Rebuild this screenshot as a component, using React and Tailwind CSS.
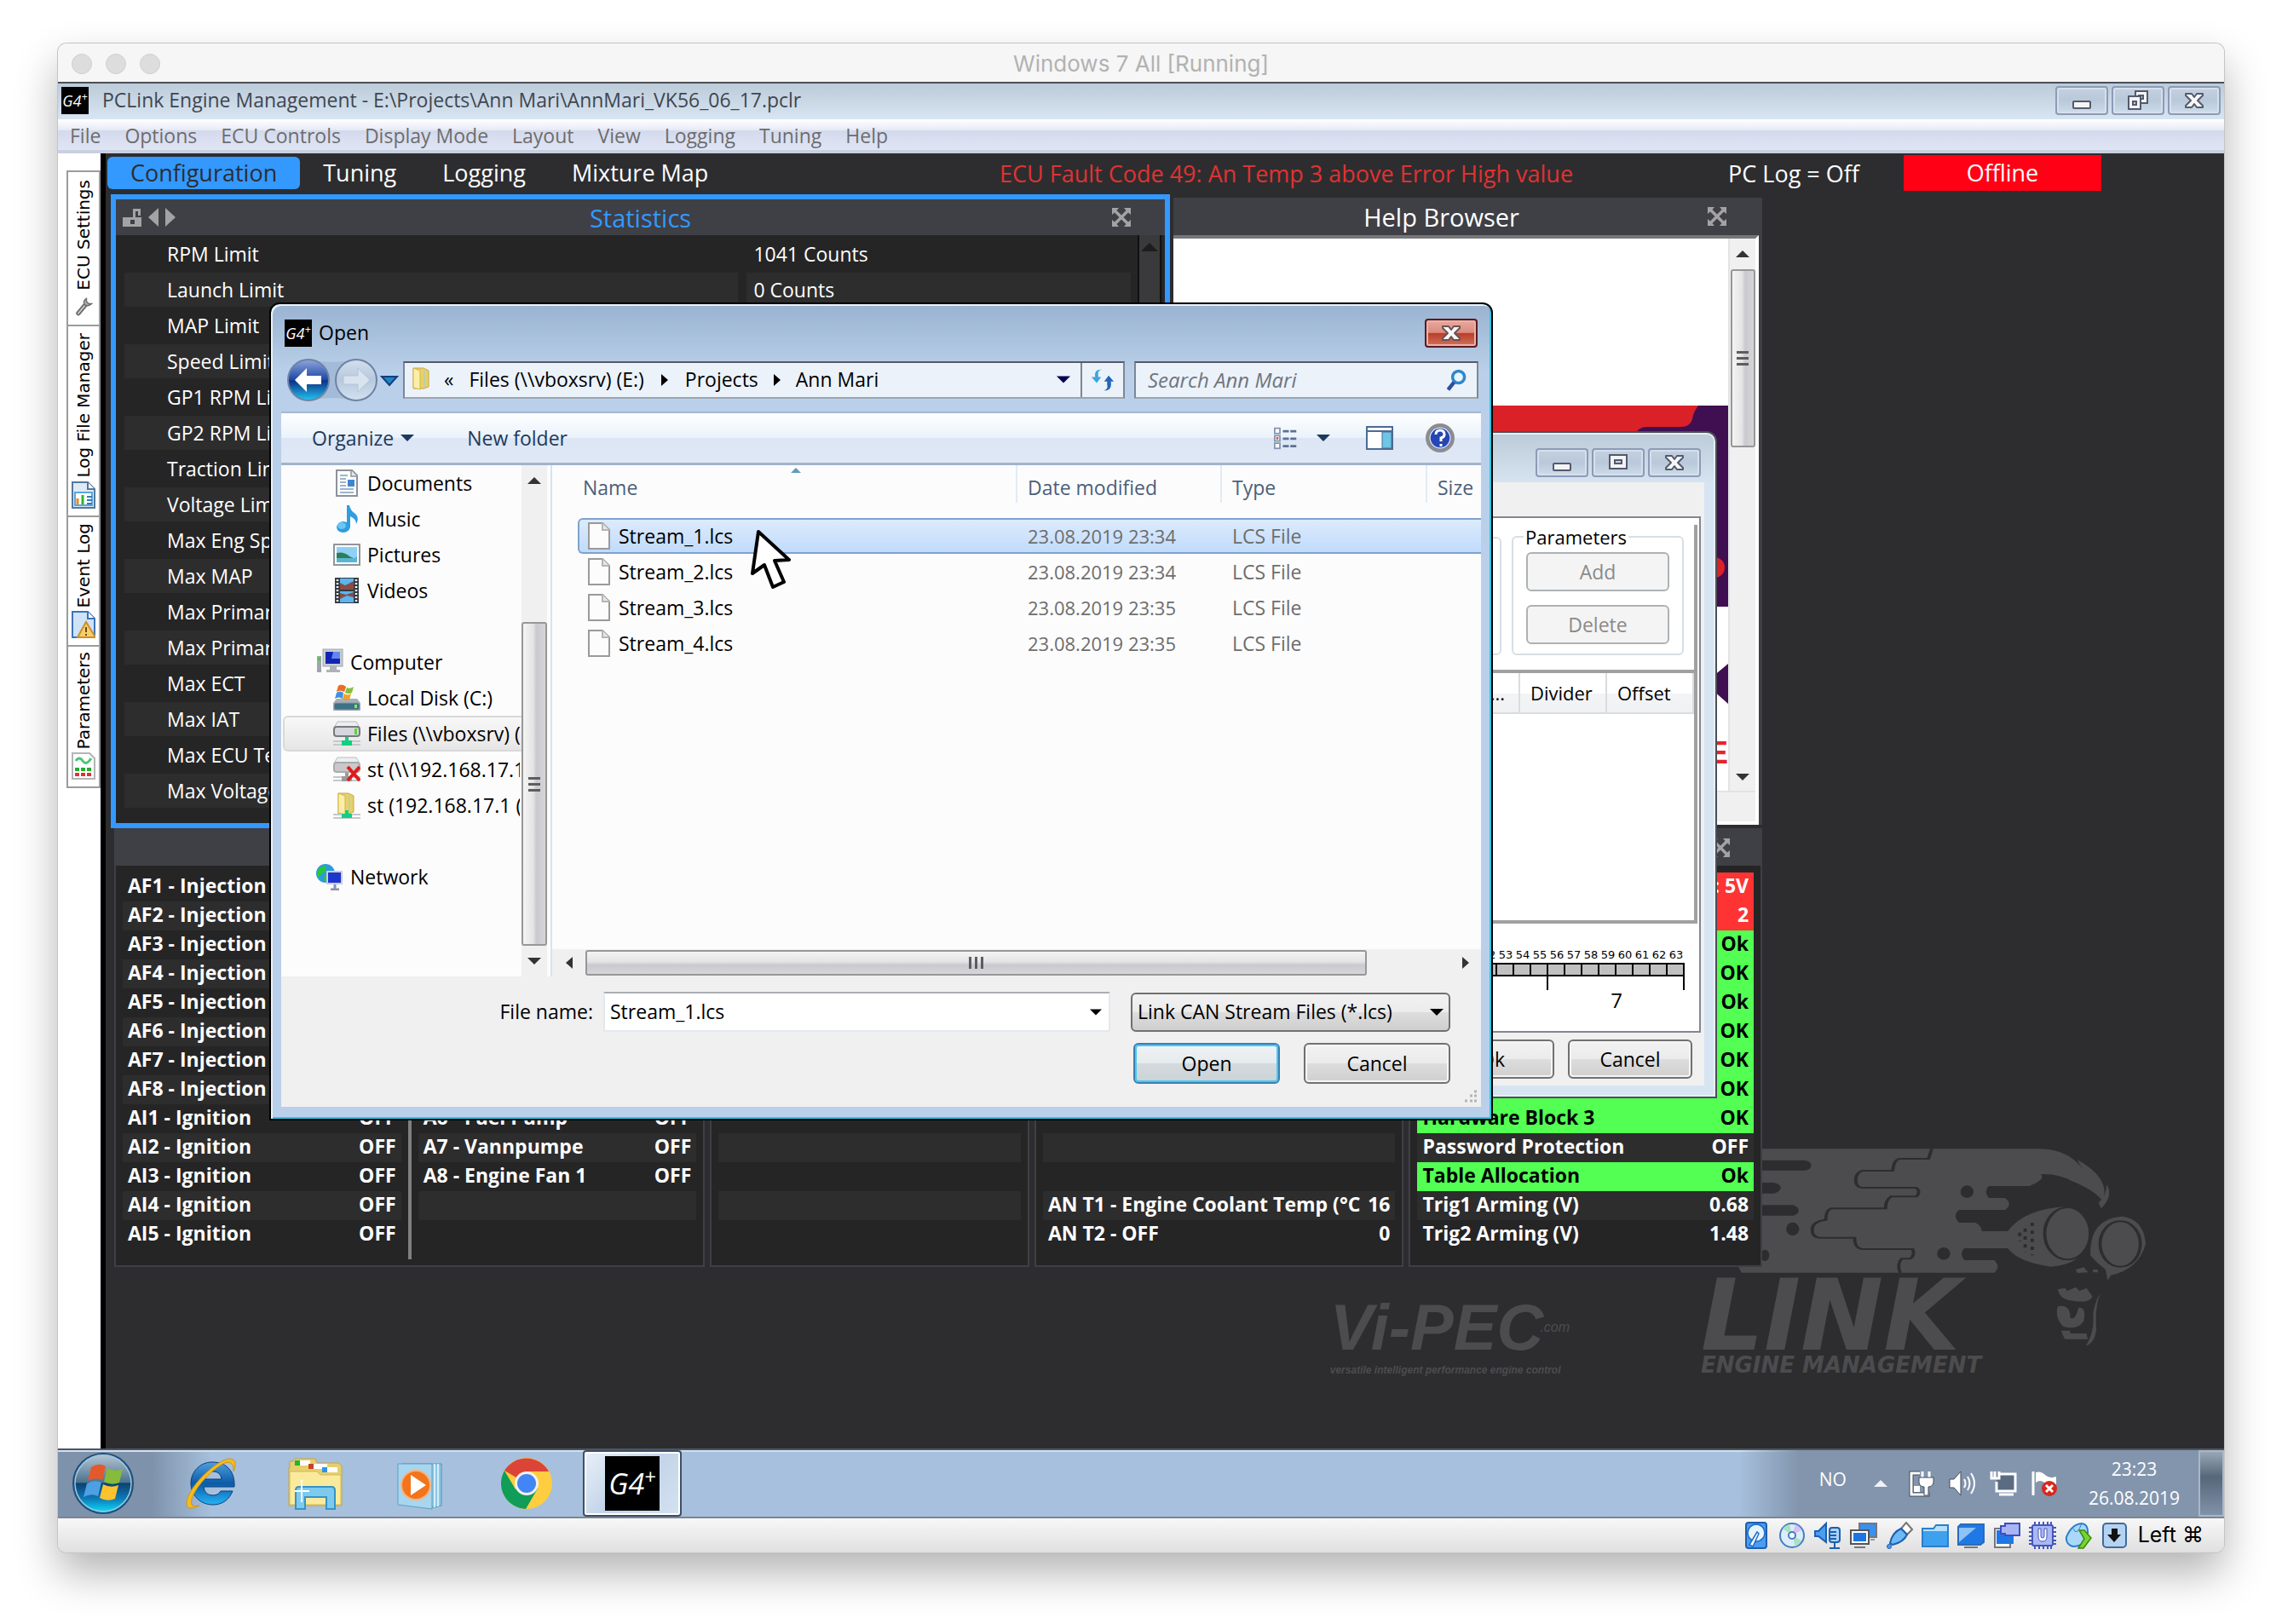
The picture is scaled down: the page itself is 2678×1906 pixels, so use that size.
import { useState } from 'react';
import clsx from 'clsx';

const UI_FONT = "font-['Open_Sans','Noto_Sans',sans-serif]";

const MENU = ['File', 'Options', 'ECU Controls', 'Display Mode', 'Layout', 'View', 'Logging', 'Tuning', 'Help'];
const PAGES = ['Configuration', 'Tuning', 'Logging', 'Mixture Map'];

const STATISTICS = [
  ['RPM Limit', '1041 Counts'],
  ['Launch Limit', '0 Counts'],
  ['MAP Limit', ''],
  ['Speed Limit', ''],
  ['GP1 RPM Limit', ''],
  ['GP2 RPM Limit', ''],
  ['Traction Limit', ''],
  ['Voltage Limit', ''],
  ['Max Eng Speed', ''],
  ['Max MAP', ''],
  ['Max Primary', ''],
  ['Max Primary', ''],
  ['Max ECT', ''],
  ['Max IAT', ''],
  ['Max ECU Temp', ''],
  ['Max Voltage', ''],
];

const blank = (n) => Array.from({ length: n }, () => ['', '']);

const AUX_OUTPUTS = [
  ...[1, 2, 3, 4, 5, 6, 7, 8].map((n) => [`AF${n} - Injection`, 'OFF']),
  ...[1, 2, 3, 4, 5].map((n) => [`AI${n} - Ignition`, 'OFF']),
];
const AUX_FUNCTIONS = [
  ...blank(8),
  ['A6 - Fuel Pump', 'OFF'],
  ['A7 - Vannpumpe', 'OFF'],
  ['A8 - Engine Fan 1', 'OFF'],
  ...blank(2),
];
const ANALOG = [...blank(11), ['AN T1 - Engine Coolant Temp (°C', '16'], ['AN T2 - OFF', '0']];
const STATUS = [
  ['', ': 5V', 'bad'],
  ['', '2', 'bad'],
  ['', 'Ok', 'good'],
  ['', 'OK', 'good'],
  ['', 'Ok', 'good'],
  ['', 'OK', 'good'],
  ['', 'OK', 'good'],
  ['', 'OK', 'good'],
  ['Hardware Block 3', 'OK', 'good'],
  ['Password Protection', 'OFF'],
  ['Table Allocation', 'Ok', 'good'],
  ['Trig1 Arming (V)', '0.68'],
  ['Trig2 Arming (V)', '1.48'],
];

const FILES = [
  ['Stream_1.lcs', '23.08.2019 23:34'],
  ['Stream_2.lcs', '23.08.2019 23:34'],
  ['Stream_3.lcs', '23.08.2019 23:35'],
  ['Stream_4.lcs', '23.08.2019 23:35'],
];

/* ---------- small icons ---------- */

function Svg({ className = 'h-8 w-8', box = '0 0 32 32', children, ...rest }) {
  return (
    <svg viewBox={box} className={clsx('shrink-0', className)} fill="none" aria-hidden="true" {...rest}>
      {children}
    </svg>
  );
}

function Triangle({ dir = 'down', className = 'h-2 w-4', color = '#000' }) {
  const paths = {
    down: 'M0 0H16L8 8Z',
    up: 'M0 8H16L8 0Z',
  };
  return (
    <Svg box="0 0 16 8" className={className}>
      <path d={paths[dir]} fill={color} />
    </Svg>
  );
}

function SideTriangle({ dir = 'right', color = '#000', className = 'h-3 w-2' }) {
  return (
    <Svg box="0 0 8 14" className={className}>
      <path d={dir === 'right' ? 'M0 0L8 7L0 14Z' : 'M8 0L0 7L8 14Z'} fill={color} />
    </Svg>
  );
}

function G4Logo({ className, textClass }) {
  return (
    <span className={clsx('flex shrink-0 items-center justify-center bg-black text-white italic', className)}>
      <span className={textClass}>
        G4<sup className="text-[70%]">+</sup>
      </span>
    </span>
  );
}

function MinimizeIcon() {
  return (
    <Svg box="0 0 28 28" className="h-7 w-7">
      <rect x="4" y="15" width="20" height="8" rx="1" fill="#f4f4f4" stroke="#545a6e" strokeWidth="2" />
    </Svg>
  );
}

function RestoreIcon() {
  return (
    <Svg box="0 0 28 28" className="h-7 w-7" stroke="#545a6e" strokeWidth="2">
      <rect x="11" y="3" width="14" height="14" fill="#f4f4f4" />
      <rect x="15" y="8" width="5" height="4" fill="#c4d0df" />
      <rect x="3" y="9" width="14" height="15" fill="#f4f4f4" />
      <rect x="8" y="15" width="4" height="4" fill="#c4d0df" />
    </Svg>
  );
}

function MaximizeIcon() {
  return (
    <Svg box="0 0 28 28" className="h-7 w-7" stroke="#545a6e" strokeWidth="2">
      <rect x="4" y="5" width="20" height="16" fill="#f4f4f4" />
      <rect x="10" y="11" width="8" height="4" fill="#c4d0df" />
    </Svg>
  );
}

function CloseIcon({ stroke = '#545a6e' }) {
  return (
    <Svg box="0 0 28 28" className="h-7 w-7">
      <path
        d="M4 6H11L14 10L17 6H24V8L18 14L24 20V22H17L14 18L11 22H4V20L10 14L4 8Z"
        fill="#f7f7f7"
        stroke={stroke}
        strokeWidth="2"
        strokeLinejoin="round"
      />
    </Svg>
  );
}

function ExpandIcon() {
  return (
    <Svg box="0 0 22 22" className="h-[22px] w-[22px]">
      <path d="M0 0H8L5.500 3L11 8.500L16.500 3L14 0H22V8L19 5.500L13.500 11L19 16.500L22 14V22H14L16.500 19L11 13.500L5.500 19L8 22H0V14L3 16.500L8.500 11L3 5.500L0 8Z" fill="#a3a3a5" />
    </Svg>
  );
}

function FolderIcon({ className = 'h-8 w-8', net }) {
  return (
    <Svg className={className}>
      <path d="M6 2H18L24 5V24L18 26H6Z" fill="#e9cf6b" stroke="#c9a63e" />
      <path d="M6 2L14 5V27L6 25Z" fill="#fbeea6" stroke="#d6b54e" />
      <path d="M19 5V24" stroke="#b8d4a0" strokeWidth="2" />
      {net && (
        <>
          <path d="M0 27H32M0 31H32" stroke="#c3c9cc" strokeWidth="2" />
          <path d="M14 22H18V26H22V31H10V26H14Z" fill="#12cf82" />
        </>
      )}
    </Svg>
  );
}

function FileIcon() {
  return (
    <Svg box="0 0 26 32" className="h-8 w-[26px]">
      <path d="M1 1H17L25 9V31H1Z" fill="#fcfcfc" stroke="#9a9a9a" strokeWidth="2" />
      <path d="M17 1V9H25" fill="#e6e6e6" stroke="#b5b5b5" strokeWidth="2" />
    </Svg>
  );
}

function DriveIcon({ kind }) {
  const off = kind === 'off';
  return (
    <Svg>
      {kind === 'local' ? (
        <>
          <path d="M6 2Q10 -1 15 3L13 9Q8 6 4 9Z" fill="#e8532a" />
          <path d="M16 4Q20 6 24 3L22 10Q18 12 14 10Z" fill="#83bf3c" />
          <path d="M4 10Q8 7 12 10L11 17Q6 14 2 17Z" fill="#3f90e0" />
          <path d="M13 11Q17 14 21 11L19 18Q15 20 11 18Z" fill="#f9b91c" />
          <path d="M4 17H28L32 22V31H0V22Z" fill="#a5b0b8" />
          <path d="M6 2Q10 -1 15 3L13 9Q8 6 4 9ZM13 11Q17 14 21 11L19 18Q15 20 11 18Z" fill="#f08a22" fillOpacity=".5" />
          <rect x="1" y="22" width="30" height="8" rx="2" fill="#3d7186" stroke="#8d9aa2" />
          <rect x="25" y="24" width="3" height="4" fill="#7ef04e" />
        </>
      ) : (
        <>
          <path d="M5 2H27L31 9H1Z" fill="#eceeef" stroke="#b9bcbf" />
          <rect x="1" y="8" width="30" height="11" rx="3" fill={off ? '#c9c9c9' : '#d5d6e0'} stroke={off ? '#a9abad' : '#76797d'} strokeWidth="2" />
          {!off && <rect x="25" y="10" width="3" height="7" fill="#5bd62b" />}
          <path d="M0 25H32M0 29H32" stroke="#c3c9cc" strokeWidth="2" />
          <path d="M14 20H18V24H22V30H10V24H14Z" fill={off ? '#9b9b9b' : '#12cf82'} />
          {off && <path d="M17 13L31 29M31 13L17 29" stroke="#dd1c1c" strokeWidth="4" />}
        </>
      )}
    </Svg>
  );
}

function DocumentsIcon() {
  return (
    <Svg>
      <path d="M4 1H22L28 7V31H4Z" fill="#fff" stroke="#8c9299" strokeWidth="2" />
      <path d="M21 1V8H28" fill="#e3e9ef" stroke="#8c9299" strokeWidth="1.500" />
      <path d="M8 7H17M8 11H15M8 15H15M8 19H15M8 23H24M8 27H24" stroke="#9fb4cf" strokeWidth="2" />
      <rect x="17" y="12" width="8" height="8" fill="#3f86d1" />
    </Svg>
  );
}

function MusicIcon() {
  return (
    <Svg>
      <path d="M16 0H19Q20 6 26 10Q31 15 27 22Q27 16 20 13V26Q18 32 11 32Q4 31 4 25Q6 19 12 19L16 20Z" fill="#2f9de0" />
      <ellipse cx="10" cy="24" rx="5" ry="4" fill="#6cc5f3" />
    </Svg>
  );
}

function PicturesIcon() {
  return (
    <Svg>
      <rect x="1" y="4" width="30" height="24" fill="#fff" stroke="#8f969c" strokeWidth="2" />
      <rect x="4" y="7" width="24" height="18" fill="#8fd0f5" />
      <path d="M4 14Q12 12 18 17T28 19V21H4Z" fill="#2d7e54" />
      <path d="M4 20H28V25H4Z" fill="#57b6d6" />
    </Svg>
  );
}

function VideosIcon() {
  return (
    <Svg>
      <rect x="2" y="1" width="28" height="30" fill="#333a42" />
      <rect x="8" y="2" width="16" height="13" fill="#5cb5f0" />
      <rect x="8" y="17" width="16" height="13" fill="#5cb5f0" />
      <path d="M8 7L14 10L24 5V15H8ZM8 19L15 21L24 18V24L16 22L8 26Z" fill="#874d43" />
      <path d="M5 3V31M27 3V31" stroke="#fff" strokeWidth="2.500" strokeDasharray="2 2" />
    </Svg>
  );
}

function ComputerIcon() {
  return (
    <Svg>
      <rect x="8" y="1" width="23" height="20" fill="#c9ccd4" stroke="#9fa3ac" />
      <rect x="11" y="4" width="17" height="14" fill="#1224b4" />
      <path d="M20 4H28V12H18Z" fill="#6286ee" />
      <path d="M16 21H24V25H28V28H12V25H16Z" fill="#aeb2ba" />
      <rect x="1" y="9" width="5" height="19" fill="#a0a5ab" />
      <rect x="2" y="11" width="3" height="3" fill="#38d62c" />
    </Svg>
  );
}

function NetworkIcon() {
  return (
    <Svg>
      <circle cx="11" cy="12" r="11" fill="#2c9bdc" />
      <path d="M1 9Q5 4 10 3Q14 8 9 11Q4 13 4 18Q0 14 1 9ZM10 14L16 16L13 22L9 20Z" fill="#27c73d" />
      <rect x="12" y="9" width="19" height="16" fill="#c9cde0" />
      <rect x="14" y="11" width="15" height="12" fill="#1d36cc" />
      <path d="M22 25V30M17 31H27" stroke="#8991ad" strokeWidth="3" />
    </Svg>
  );
}

/* ---------- shared chrome ---------- */

function FrameButton({ label, children }) {
  return (
    <button
      type="button"
      aria-label={label}
      className="flex h-[34px] w-[62px] items-center justify-center rounded-[4px] border-2 border-[#8c9bb8] bg-[linear-gradient(#c3d0df,#b9c9da_50%,#cedcea)] shadow-[inset_0_0_0_2px_#d5e0ec]"
    >
      {children}
    </button>
  );
}

function PushButton({ children, disabled, primary, className }) {
  return (
    <button
      type="button"
      disabled={disabled}
      className={clsx(
        'flex items-center justify-center rounded-md border-2 text-[23px]',
        disabled && 'border-[#adb2b5] bg-[#f4f4f4] text-[#8a8a8a]',
        primary &&
          'border-[#3c7fb1] bg-[linear-gradient(#f0f3f5,#e5eaed_50%,#d4dadd_50%,#ccd3d6)] shadow-[inset_0_0_0_2px_#48c8f0]',
        !disabled &&
          !primary &&
          'border-[#707070] bg-[linear-gradient(#f2f2f2,#ebebeb_50%,#dddddd_50%,#cfcfcf)] shadow-[inset_0_0_0_2px_#f5f5f5]',
        className,
      )}
    >
      {children}
    </button>
  );
}

function Grip({ horizontal }) {
  return (
    <span className={clsx('flex', horizontal ? 'gap-[4px]' : 'flex-col gap-[4px]')}>
      {[0, 1, 2].map((i) => (
        <span key={i} className={clsx('bg-[#5d5d5d]', horizontal ? 'h-[14px] w-[3px]' : 'h-[3px] w-[14px]')} />
      ))}
    </span>
  );
}

function ScrollThumb({ className }) {
  return (
    <div
      className={clsx(
        'flex items-center justify-center rounded-[3px] border-2 border-[#979797] bg-[linear-gradient(90deg,#f4f4f4,#e4e4e6_45%,#c9c9ce_60%,#d6d6da)]',
        className,
      )}
    >
      <Grip />
    </div>
  );
}

/* ---------- PCLink main window ---------- */

function TitleBar() {
  return (
    <header className="flex h-11 items-center border-t-2 border-[#4c4f54] bg-[linear-gradient(#bccbd9,#d8e5f2)] pr-1 pb-[3px] pl-1">
      <G4Logo className="h-8 w-8" textClass="text-[18px] leading-none" />
      <h1 className="ml-4 text-[23px] text-[#3f4650]">
        PCLink Engine Management - E:\Projects\Ann Mari\AnnMari_VK56_06_17.pclr
      </h1>
      <div className="ml-auto flex gap-1">
        <FrameButton label="Minimize"><MinimizeIcon /></FrameButton>
        <FrameButton label="Restore"><RestoreIcon /></FrameButton>
        <FrameButton label="Close"><CloseIcon /></FrameButton>
      </div>
    </header>
  );
}

function MenuBar() {
  return (
    <nav className="flex h-10 items-center gap-7 border-b-4 border-[#c9d0e0] bg-[linear-gradient(#ffffff,#e5e9f4_37%,#d4daed_37%,#e0e5f5)] px-[14px] pt-[2px] text-[23px] text-[#6d6d6d]">
      {MENU.map((item) => (
        <button key={item} type="button">{item}</button>
      ))}
    </nav>
  );
}

function SideTab({ label, icon, className }) {
  return (
    <button
      type="button"
      className={clsx('flex w-10 flex-col items-center justify-end gap-1 border-2 border-b-0 border-[#9b9b9b] bg-white pb-2 last:border-b-2', className)}
    >
      <span className="rotate-180 font-['DejaVu_Sans',sans-serif] text-[20px] leading-6 whitespace-nowrap text-black [writing-mode:vertical-rl]">
        {label}
      </span>
      {icon}
    </button>
  );
}

function SideTabs() {
  return (
    <aside className="flex w-14 shrink-0 flex-col border-r-[6px] border-black bg-white pt-5 pl-[10px]">
      <SideTab
        label="ECU Settings"
        className="h-[181px]"
        icon={
          <Svg className="h-7 w-7">
            <path d="M9 26L19 14" stroke="#6b6b6b" strokeWidth="6" strokeLinecap="round" />
            <path d="M9 26L19 14" stroke="#d0d0d0" strokeWidth="2" strokeLinecap="round" />
            <path d="M20 6Q15 9 17 14Q21 18 27 13L23 13L20 10Z" fill="#a9a9a9" stroke="#6b6b6b" strokeWidth="1.500" />
          </Svg>
        }
      />
      <SideTab
        label="Log File Manager"
        className="h-[224px]"
        icon={
          <Svg className="h-8 w-7" box="0 0 28 32">
            <path d="M1 1H19L27 9V31H1Z" fill="#dfeaf5" stroke="#55789b" strokeWidth="2" />
            <path d="M19 1V9H27" fill="#fff" stroke="#55789b" strokeWidth="2" />
            <rect x="4" y="13" width="20" height="15" fill="#fff" stroke="#5aa7dc" strokeWidth="2" />
            <path d="M7 27V20" stroke="#e98b1e" strokeWidth="3" />
            <path d="M13 27V16" stroke="#30b42e" strokeWidth="3" />
            <path d="M18 18H24M18 22H24M18 26H24" stroke="#3578c0" strokeWidth="2" />
          </Svg>
        }
      />
      <SideTab
        label="Event Log"
        className="h-[152px]"
        icon={
          <Svg className="h-8 w-7" box="0 0 28 32">
            <path d="M1 1H19L27 9V31H1Z" fill="#cfe2f8" stroke="#3d74b8" strokeWidth="2" />
            <path d="M19 1V9H27" fill="#fff" stroke="#3d74b8" strokeWidth="2" />
            <path d="M17 13L28 31H7Z" fill="#f7cf6a" stroke="#cc8f28" strokeWidth="2" />
            <path d="M17 19V25M17 27V29" stroke="#6b4a12" strokeWidth="2" />
          </Svg>
        }
      />
      <SideTab
        label="Parameters"
        className="h-[168px]"
        icon={
          <Svg className="h-8 w-7" box="0 0 28 32">
            <path d="M1 1H21L27 7V31H1Z" fill="#fff" stroke="#b5b5b5" strokeWidth="2" />
            <path d="M5 10Q9 4 13 10T23 7" stroke="#48c870" strokeWidth="3" />
            <path d="M4 20H24" stroke="#1fae2d" strokeWidth="4" strokeDasharray="5 2" />
            <path d="M4 26H24" stroke="#e03131" strokeWidth="4" strokeDasharray="5 2" />
          </Svg>
        }
      />
    </aside>
  );
}

function PageTabs() {
  const [page, setPage] = useState('Configuration');
  return (
    <div className="flex h-12 items-start pt-[2px] pl-[2px] text-[27px] text-white">
      <div className="flex flex-1 items-center">
        {PAGES.map((p) => (
          <button
            key={p}
            type="button"
            onClick={() => setPage(p)}
            className={clsx(
              'mt-[2px] h-[38px] rounded-md px-[27px] leading-[38px] whitespace-nowrap',
              p === page && 'bg-[#3399ff] text-[#2d2d2f]',
            )}
          >
            {p}
          </button>
        ))}
      </div>
      <p className="leading-[44px] whitespace-nowrap text-[#e03232]">
        ECU Fault Code 49: An Temp 3 above Error High value
      </p>
      <p className="ml-[182px] leading-[44px] whitespace-nowrap">PC Log = Off</p>
      <button type="button" className="mr-36 ml-[52px] h-[42px] w-[232px] bg-[#ff0014] leading-[42px]">Offline</button>
    </div>
  );
}

function StatisticsPanel() {
  return (
    <section className="flex h-[744px] flex-col border-[6px] border-[#3399ff] bg-[#252526]">
      <header className="grid h-[42px] grid-cols-[1fr_auto_1fr] items-center bg-[#3f3f46] px-2">
        <Svg box="0 0 64 24" className="h-6 w-16">
          <path d="M0 12H22V23H0ZM12 12V2H21V10H18V5H15V12Z" fill="#a3a3a5" />
          <rect x="9" y="15" width="5" height="5" fill="#3f3f46" />
          <path d="M42 1V23L30 12ZM50 1V23L62 12Z" fill="#a3a3a5" />
        </Svg>
        <h2 className="pt-[2px] text-[29px] leading-10 text-[#3399ff]">Statistics</h2>
        <button type="button" aria-label="Expand statistics" className="mr-8 justify-self-end"><ExpandIcon /></button>
      </header>
      <div className="flex min-h-0 flex-1">
        <table className="mr-2 ml-[10px] flex-1 table-fixed border-separate border-spacing-0 self-start text-[23px] leading-10 text-white">
          <tbody>
            {STATISTICS.map(([name, value], i) => (
              <tr key={i} className="h-[42px]">
                <th scope="row" className={clsx('w-[61%] border-t-2 border-[#252526] p-0 pl-[50px] text-left font-normal', i % 2 && 'bg-[#2d2d2d]')}>
                  {name}
                </th>
                <td className={clsx('border-t-2 border-l-[10px] border-[#252526] p-0 pl-2', i % 2 && 'bg-[#2d2d2d]')}>
                  {value}
                </td>
              </tr>
            ))}
          </tbody>
        </table>
        <div className="mr-1 flex w-7 flex-col items-center border-x-2 border-[#111] bg-[#3a3a3c] pt-2">
          <Triangle dir="up" className="h-3 w-5" color="#1d1d1d" />
        </div>
      </div>
    </section>
  );
}

function HelpPanel() {
  return (
    <section className="mt-1 ml-1 flex h-[736px] flex-col bg-[#3f3f46]">
      <header className="grid h-11 grid-cols-[1fr_auto_1fr] items-center pr-[62px]">
        <h2 className="col-start-2 pt-[2px] text-[29px] leading-10 text-white">Help Browser</h2>
        <button type="button" aria-label="Expand help" className="-mr-5 justify-self-end"><ExpandIcon /></button>
      </header>
      <div className="mr-1 flex min-h-0 flex-1 flex-col border-t-4 border-r-4 border-b-4 border-t-[#77777a] border-r-white border-b-white bg-[#f0f0f0]">
        <div className="flex min-h-0 flex-1 bg-white">
          <div className="flex flex-1 flex-col items-end overflow-hidden pt-[196px]">
            <svg viewBox="0 0 650 350" className="h-[350px] w-[650px] shrink-0" aria-hidden="true">
              <rect width="650" height="236" fill="#3f0f52" />
              <path d="M0 0H615Q609 8 608 16Q605 25 595 25H555Q545 25 540 34H0Z" fill="#da2128" />
              <circle cx="634" cy="190" r="12" fill="#da2128" />
              <path d="M650 303V350L632 334Q626 327 632 318Z" fill="#3f0f52" />
            </svg>
            <p className="mt-[38px] font-['Liberation_Sans',sans-serif] text-[36px] leading-10 font-bold text-[#e4252b]">E</p>
          </div>
          <div className="flex w-8 flex-col items-center border-l-2 border-[#e3e3e3] bg-[#f0f0f0]">
            <div className="flex h-9 items-center"><Triangle dir="up" className="h-2 w-4" color="#333" /></div>
            <ScrollThumb className="h-[209px] w-[29px]" />
            <div className="mt-auto flex h-8 items-center"><Triangle className="h-2 w-4" color="#333" /></div>
          </div>
        </div>
        <div className="h-9 border-t-2 border-[#e3e3e3] bg-[#f0f0f0]" />
      </div>
    </section>
  );
}

function ValueTable({ rows, valueWidth = 'w-[66px]' }) {
  return (
    <table className="w-full table-fixed">
      <tbody>
        {rows.map(([name, value, state], i) => (
          <tr
            key={i}
            className={clsx(
              'h-[34px] leading-[30px]',
              state === 'good' && 'bg-[#52ff52] text-black',
              state === 'bad' && 'bg-[#ff3333]',
              !state && i % 2 && 'bg-[#2d2d2d]',
            )}
          >
            <th scope="row" className="p-0 pb-1 pl-[6px] text-left font-bold whitespace-nowrap">{name}</th>
            <td className={clsx('p-0 pr-[6px] pb-1 text-right whitespace-nowrap', valueWidth)}>{value}</td>
          </tr>
        ))}
      </tbody>
    </table>
  );
}

function ValuePanel({ children, expandable }) {
  return (
    <section className="flex flex-col border-2 border-[#3f3f46] bg-[#252526]">
      <header className="flex h-[42px] items-center justify-end bg-[#3f3f46] pr-9">
        {expandable && <button type="button" aria-label="Expand status"><ExpandIcon /></button>}
      </header>
      <div className="flex px-2 pt-2 pb-[19px]">{children}</div>
    </section>
  );
}

function HeadArt({ className }) {
  return (
    <svg viewBox="784 45 753 705" preserveAspectRatio="none" className={className} aria-hidden="true">
      <g fill="#4c4c4e">
        <path d="M784 55H1340Q1400 58 1426 150Q1405 90 1410 95Q1470 160 1455 240Q1440 200 1400 170Q1370 140 1340 145Q1352 160 1320 186H1245Q1235 205 1245 228H1275Q1290 250 1275 270H1190Q1178 290 1190 315H1220Q1232 325 1232 345H1280Q1310 265 1390 258Q1430 280 1432 360Q1425 460 1360 470Q1300 455 1280 405H1200Q1190 425 1200 447H1255Q1268 470 1255 491H790L784 470Z" />
        <path d="M1462 180Q1475 220 1452 265L1447 245Q1462 220 1462 180Z" />
        <path d="M1490 293Q1530 300 1534 390Q1520 480 1470 500L1464 518L1460 480Q1440 450 1432 430Q1430 300 1490 293Z" />
        <path d="M1405 480L1420 472L1428 490L1408 492ZM1437 480H1446V490H1437Z" />
        <path d="M1372 550L1385 545L1390 555L1405 542L1412 555L1425 545L1436 575Q1430 600 1400 590Q1376 588 1372 550ZM1372 610Q1395 600 1395 650Q1405 660 1410 615Q1425 610 1420 660Q1410 695 1382 680Q1366 650 1372 610ZM1378 695H1395V705H1425L1427 725H1385Z" />
        <path d="M1452 560Q1440 600 1443 690Q1440 740 1424 748Q1440 700 1437 640Q1440 590 1452 560Z" />
      </g>
      <g fill="#2d2d2f">
        <path d="M784 95H905Q918 97 918 113T905 131H784ZM784 174H850Q862 180 862 192T850 212H784ZM784 253H885Q895 260 895 272T885 290H784Z" />
        <ellipse cx="884" cy="337" rx="12" ry="23" />
        <ellipse cx="1205" cy="206" rx="12" ry="22" />
        <ellipse cx="1162" cy="424" rx="12" ry="22" />
        <ellipse cx="833" cy="430" rx="8" ry="20" />
      </g>
      <g fill="none" stroke="#2d2d2f" strokeWidth="6">
        <path d="M1140 55L1134 90H1080Q1070 95 1068 132H1012Q1000 140 1000 165Q1000 190 1012 192H1112Q1120 205 1112 223H1065Q1055 235 1055 265H955Q945 270 945 305Q920 310 920 340Q920 368 935 368H998Q998 405 1012 408H1105Q1110 430 1100 442H1085Q1075 460 1082 491" />
        <ellipse cx="1390" cy="353" rx="42" ry="92" />
        <ellipse cx="1487" cy="390" rx="37" ry="80" />
      </g>
      <path d="M1370 290Q1400 320 1400 360Q1400 390 1388 405Q1355 380 1370 290ZM1465 330Q1490 360 1495 400Q1495 430 1486 445Q1450 420 1465 330Z" fill="#4c4c4e" />
      <path d="M1325 315V430M1312 335V420M1302 350V380" stroke="#2d2d2f" strokeWidth="6" strokeDasharray="12 16" />
    </svg>
  );
}

function Watermarks() {
  return (
    <div className="absolute right-[90px] bottom-[84px] flex items-end font-['Liberation_Sans',sans-serif] text-[#4c4c4e] italic">
      <div className="mr-[154px]">
        <p className="flex items-center text-[76px] leading-[84px] font-bold">
          Vi-PEC<span className="-ml-1 text-[16px] font-normal">.com</span>
        </p>
        <p className="text-[12px] leading-4 font-bold">versatile intelligent performance engine control</p>
      </div>
      <div className="flex flex-col">
        <HeadArt className="ml-11 h-[235px] w-[480px]" />
        <div className="-mt-20 font-['DejaVu_Sans',sans-serif] font-bold">
          <p className="text-[116px] leading-[88px]">LINK</p>
          <p className="text-[26px] leading-7">ENGINE MANAGEMENT</p>
        </div>
      </div>
    </div>
  );
}

function Workspace() {
  return (
    <main className="relative flex min-w-0 flex-1 flex-col bg-[#2d2d2f]">
      <Watermarks />
      <PageTabs />
      <div className="relative w-[78.200%] pl-[6px]">
        <div className="grid grid-cols-[1243fr_695fr]">
          <StatisticsPanel />
          <HelpPanel />
        </div>
        <div className="grid grid-cols-[694fr_375fr_434fr_415fr] gap-[6px] pl-1 text-[23px] font-bold text-white">
          <ValuePanel>
            <ValueTable rows={AUX_OUTPUTS} />
            <div className="mx-2 -mb-3 w-1 shrink-0 bg-[#808080]" />
            <ValueTable rows={AUX_FUNCTIONS} />
          </ValuePanel>
          <ValuePanel><ValueTable rows={blank(13)} /></ValuePanel>
          <ValuePanel><ValueTable rows={ANALOG} valueWidth="w-[34px]" /></ValuePanel>
          <ValuePanel expandable><ValueTable rows={STATUS} /></ValuePanel>
        </div>
      </div>
    </main>
  );
}

/* ---------- CAN setup window ---------- */

function CanSetupWindow() {
  return (
    <section className="absolute top-[410px] left-[1100px] flex h-[783px] w-[847px] flex-col rounded-t-xl border-2 border-[#4c4f54] bg-[#d7e4f1] bg-[linear-gradient(#bccbd9,#d7e4f1_60px)] p-[13px] pt-0 shadow-[inset_0_0_0_2px_#e6eef6]">
      <header className="flex h-[58px] items-center justify-end gap-1 pt-3 pr-1">
        <FrameButton label="Minimize CAN setup"><MinimizeIcon /></FrameButton>
        <FrameButton label="Maximize CAN setup"><MaximizeIcon /></FrameButton>
        <FrameButton label="Close CAN setup"><CloseIcon /></FrameButton>
      </header>
      <div className="flex flex-1 flex-col bg-[#f0f0f0] pt-10 pr-1">
        <div className="flex h-[606px] flex-col border-2 border-[#828790] bg-white">
          <div className="mt-2 mr-[2px] flex h-[174px] justify-end gap-3 border-r-4 border-b-4 border-[#a0a0a0] pr-3">
            <div className="mt-[14px] h-[139px] w-48 rounded-md border-2 border-[#d5dfe5]" />
            <fieldset className="flex h-[153px] w-[202px] flex-col items-center gap-4 rounded-md border-2 border-[#d5dfe5] pt-1">
              <legend className="ml-3 px-[2px] text-[22px] leading-7">Parameters</legend>
              <PushButton disabled className="h-[46px] w-[168px] shrink-0">Add</PushButton>
              <PushButton disabled className="h-[46px] w-[168px] shrink-0">Delete</PushButton>
            </fieldset>
          </div>
          <div className="mr-[2px] h-[294px] border-r-4 border-b-4 border-[#a0a0a0]">
            <table className="ml-auto table-fixed border-separate border-spacing-0 text-[22px]">
              <thead>
                <tr className="h-[48px] bg-[linear-gradient(#fff_50%,#f3f4f6_50%,#eff1f3)]">
                  <th className="w-[120px] border-r-2 border-b-2 border-[#dcdcdc] pr-4 text-right font-normal">Mul...</th>
                  <th className="w-[102px] border-r-2 border-b-2 border-[#dcdcdc] pl-3 text-left font-normal">Divider</th>
                  <th className="w-[102px] border-r-2 border-b-2 border-[#dcdcdc] pl-3 text-left font-normal">Offset</th>
                </tr>
              </thead>
            </table>
          </div>
          <div className="mt-7 mr-[17px] flex justify-end">
            {[48, 56].map((start) => (
              <div key={start} className="w-40">
                <div className="flex font-['DejaVu_Sans',sans-serif] text-[13px] leading-[18px]">
                  {[0, 1, 2, 3, 4, 5, 6, 7].map((n) => (
                    <span key={n} className="w-5 text-center">{start + n}</span>
                  ))}
                </div>
                <div className="flex h-4 border-y-2 border-black">
                  {[0, 1, 2, 3, 4, 5, 6, 7].map((n) => (
                    <span key={n} className="w-5 border-r-2 border-black bg-[#c0c0c0]" />
                  ))}
                </div>
                <div className="ml-[-2px] h-4 border-x-2 border-black" />
                <p className="text-center text-[24px] leading-6">{start / 8}</p>
              </div>
            ))}
          </div>
        </div>
        <div className="flex flex-1 items-center justify-end gap-4 pr-[10px]">
          <PushButton className="h-[46px] w-[146px]">Ok</PushButton>
          <PushButton className="h-[46px] w-[146px]">Cancel</PushButton>
        </div>
      </div>
    </section>
  );
}

/* ---------- Open dialog ---------- */

function NavArrows() {
  return (
    <Svg box="0 0 132 52" className="h-[52px] w-[132px]">
      <defs>
        <linearGradient id="back" x2="0" y2="1">
          <stop offset="0" stopColor="#8fa6dd" />
          <stop offset=".5" stopColor="#1c46a4" />
          <stop offset=".52" stopColor="#0b3186" />
          <stop offset="1" stopColor="#22c5f2" />
        </linearGradient>
        <linearGradient id="forward" x2="0" y2="1">
          <stop offset="0" stopColor="#d2deec" />
          <stop offset=".5" stopColor="#b7c9de" />
          <stop offset="1" stopColor="#d3e2f1" />
        </linearGradient>
      </defs>
      <path d="M26 2Q54 8 82 2V50Q54 44 26 50Z" fill="#a3bbd8" />
      <circle cx="26" cy="26" r="24" fill="url(#back)" stroke="#6d84a6" strokeWidth="2" />
      <circle cx="82" cy="26" r="24" fill="url(#forward)" stroke="#6f83a0" strokeWidth="2" />
      <path d="M10 26L24 12V21H41V31H24V40Z" fill="#fff" />
      <path d="M98 26L84 12V21H67V31H84V40Z" fill="#d8e3ef" stroke="#b4c5d9" />
      <path d="M112 22H130L121 32Z" fill="#1f86c4" stroke="#123f7c" strokeWidth="2" />
    </Svg>
  );
}

function AddressBar() {
  return (
    <div className="flex h-[75px] items-center gap-[5px] pr-[3px] pl-[6px]">
      <NavArrows />
      <div className="flex h-11 flex-1 items-center border-2 border-t-[#565b63] border-r-[#7d8794] border-b-[#9aa5b3] border-l-[#7d8794] bg-[#ebf2fa] text-[23px] whitespace-nowrap text-black">
        <FolderIcon className="mr-[10px] ml-1 h-8 w-8" />
        <span className="mr-[18px]">«</span>
        <span>Files (\\vboxsrv) (E:)</span>
        <SideTriangle className="mx-5 h-[14px] w-2" />
        <span>Projects</span>
        <SideTriangle className="mx-[18px] h-[14px] w-2" />
        <span>Ann Mari</span>
        <Triangle className="mr-3 ml-auto h-[9px] w-4" color="#00004e" />
        <button type="button" aria-label="Refresh" className="flex h-full w-[50px] items-center justify-center border-l-2 border-[#7d8794]">
          <Svg className="h-7 w-7">
            <path d="M15 2Q9 3 10 9V12H14L8 20L1 12H6Q4 1 15 2Z" fill="#3ba6e0" />
            <path d="M17 30Q24 29 22 22V18H18L24 10L31 18H27Q29 31 17 30Z" fill="#2465b8" />
          </Svg>
        </button>
      </div>
      <label className="ml-[6px] flex h-11 w-[404px] items-center border-2 border-t-[#565b63] border-r-[#7d8794] border-b-[#9aa5b3] border-l-[#7d8794] bg-[#ebf2fa] px-[14px]">
        <span className="sr-only">Search Ann Mari</span>
        <input
          type="search"
          placeholder="Search Ann Mari"
          className="min-w-0 flex-1 bg-transparent text-[24px] italic outline-none placeholder:text-[#70757c]"
        />
        <Svg className="-mr-1 h-7 w-7">
          <circle cx="19" cy="12" r="8" stroke="#2f86c8" strokeWidth="4" fill="#e6f4fd" />
          <path d="M13 19L5 29" stroke="#2b4f9e" strokeWidth="5" />
        </Svg>
      </label>
    </div>
  );
}

function DialogToolbar() {
  return (
    <div className="flex h-[63px] items-center border-t-2 border-b-[3px] border-t-[#a3b8d3] border-b-[#a2b2cb] bg-[linear-gradient(#ffffff,#eaf2fb_50%,#dce6f4_50%,#dfe8f6)] pr-[38px] pl-9 text-[23px] text-[#1e395b]">
      <button type="button" className="flex items-center gap-2">
        Organize <Triangle className="h-2 w-4" color="#1e395b" />
      </button>
      <button type="button" className="ml-[62px]">New folder</button>
      <button type="button" aria-label="Change view" className="ml-auto flex items-center gap-5">
        <Svg className="h-7 w-8">
          {[3, 13, 23].map((y) => (
            <g key={y}>
              <rect x="1" y={y} width="7" height="7" fill="#fff" stroke="#8295b3" strokeWidth="2" />
              <path d={`M12 ${y + 4}H20M22 ${y + 4}H30`} stroke="#5b7192" strokeWidth="3" />
            </g>
          ))}
          <rect x="3" y="15" width="3" height="3" fill="#d4502a" />
        </Svg>
        <Triangle className="h-2 w-4" color="#1e395b" />
      </button>
      <button type="button" aria-label="Preview pane" className="ml-[42px]">
        <Svg className="h-8 w-8">
          <rect x="1" y="3" width="30" height="26" fill="#fff" stroke="#4d6b92" strokeWidth="2" />
          <path d="M2 8H30" stroke="#4d6b92" strokeWidth="2" />
          <rect x="19" y="9" width="11" height="19" fill="#6cc6e6" stroke="#4d6b92" />
        </Svg>
      </button>
      <button type="button" aria-label="Help" className="mr-[-7px] ml-[38px]">
        <Svg className="h-[34px] w-[34px]" box="0 0 34 34">
          <circle cx="17" cy="17" r="15" fill="#2546b4" stroke="#8d8d8d" strokeWidth="4" />
          <circle cx="17" cy="17" r="12" stroke="#d9def0" strokeWidth="1.500" />
          <path d="M12 13Q12 8 17 8T22 13Q22 16 18 17V21M18 24V27" stroke="#fff" strokeWidth="3" />
        </Svg>
      </button>
    </div>
  );
}

function NavItem({ icon, label, root, active }) {
  return (
    <li
      className={clsx(
        'flex h-[42px] items-center gap-2 overflow-hidden border-2 text-[23px] leading-10 whitespace-nowrap text-black',
        root ? 'pl-[37px]' : 'pl-[57px]',
        active ? 'rounded-l-md border-r-0 border-[#d9d9d9] bg-[linear-gradient(#f8f8f8,#e6e6e6)]' : 'border-transparent',
      )}
    >
      {icon}
      {label}
    </li>
  );
}

function NavPane() {
  return (
    <nav className="flex w-[318px] shrink-0 border-r-2 border-[#d6e3f3]">
      <ul className="min-w-0 flex-1 overflow-hidden pl-[2px]">
        <NavItem icon={<DocumentsIcon />} label="Documents" />
        <NavItem icon={<MusicIcon />} label="Music" />
        <NavItem icon={<PicturesIcon />} label="Pictures" />
        <NavItem icon={<VideosIcon />} label="Videos" />
        <li className="h-[42px]" />
        <NavItem root icon={<ComputerIcon />} label="Computer" />
        <NavItem icon={<DriveIcon kind="local" />} label="Local Disk (C:)" />
        <NavItem active icon={<DriveIcon />} label="Files (\\vboxsrv) (E:)" />
        <NavItem icon={<DriveIcon kind="off" />} label="st (\\192.168.17.1) (S:)" />
        <NavItem icon={<FolderIcon net />} label="st (192.168.17.1 (at) (T:)" />
        <li className="h-[42px]" />
        <NavItem root icon={<NetworkIcon />} label="Network" />
      </ul>
      <div className="mr-1 flex w-[30px] flex-col items-center bg-[#f0f0f0]">
        <div className="flex h-9 items-center"><Triangle dir="up" className="h-2 w-4" color="#333" /></div>
        <ScrollThumb className="mt-[148px] h-[380px] w-[30px]" />
        <div className="flex flex-1 items-center"><Triangle className="h-2 w-4" color="#333" /></div>
      </div>
    </nav>
  );
}

function FileList() {
  const [selected, setSelected] = useState('Stream_1.lcs');
  const headings = ['Name', 'Date modified', 'Type', 'Size'];
  return (
    <div className="flex min-w-0 flex-1 flex-col bg-[#fcfcfc]">
      <table className="ml-[30px] table-fixed border-separate border-spacing-0 text-[23px] text-[#6d6d6d]">
        <colgroup>
          <col className="w-[516px]" />
          <col className="w-[240px]" />
          <col className="w-[241px]" />
          <col />
        </colgroup>
        <thead>
          <tr>
            {headings.map((h, i) => (
              <th key={h} scope="col" className="p-0 text-left font-normal text-[#4c607a]">
                <div className={clsx('relative mb-[18px] h-[44px] pt-1 leading-[44px]', i === 0 ? 'pl-[6px]' : 'pl-3', i < 3 && 'border-r-2 border-[#e0ebf7]')}>
                  {h}
                  {i === 0 && <Triangle dir="up" className="absolute top-[2px] left-[250px] h-2 w-3" color="#5f9cb8" />}
                </div>
              </th>
            ))}
          </tr>
        </thead>
        <tbody>
          {FILES.map(([name, date]) => {
            const on = name === selected;
            const cell = on && 'border-[#7da2ce] bg-[linear-gradient(#dcebfc,#c1dbfc)]';
            return (
              <tr key={name} onClick={() => setSelected(name)} className="h-[42px] leading-[38px]">
                <td className={clsx('border-y-2 p-0 text-black', on ? 'rounded-l-md border-l-2' : 'border-l-2 border-transparent', cell)}>
                  <span className="flex items-center gap-[10px] pl-[10px]"><FileIcon />{name}</span>
                </td>
                <td className={clsx('border-y-2 p-0 pl-3 text-[22px]', !on && 'border-transparent', cell)}>{date}</td>
                <td className={clsx('border-y-2 p-0 pl-3', !on && 'border-transparent', cell)}>LCS File</td>
                <td className={clsx('border-y-2 p-0', !on && 'border-transparent', cell)} />
              </tr>
            );
          })}
        </tbody>
      </table>
      <div className="mt-auto flex h-8 items-center bg-[#f0f0f0]">
        <div className="flex w-[39px] justify-center"><SideTriangle dir="left" color="#333" className="h-[14px] w-2" /></div>
        <div className="flex h-[30px] w-[917px] items-center justify-center rounded-[3px] border-2 border-[#979797] bg-[linear-gradient(#f4f4f4,#e4e4e6_45%,#c9c9ce_60%,#d6d6da)]">
          <Grip horizontal />
        </div>
        <SideTriangle color="#333" className="mr-[14px] ml-auto h-[14px] w-2" />
      </div>
    </div>
  );
}

function OpenDialog() {
  return (
    <section
      role="dialog"
      aria-label="Open"
      className="absolute top-[259px] left-[248px] flex h-[960px] w-[1436px] flex-col rounded-t-xl border-2 border-black bg-[#bad0ea] bg-[linear-gradient(#99b3d0,#bad0ea_80px)] px-3 pb-[14px] shadow-[inset_2px_2px_0_#e9f1fa,inset_-2px_-2px_0_#2fc6e6]"
    >
      <header className="flex h-[51px] items-center pt-4 pr-1 pl-1">
        <G4Logo className="h-8 w-8" textClass="text-[18px] leading-none" />
        <h2 className="ml-2 text-[23px] text-black">Open</h2>
        <button
          type="button"
          aria-label="Close"
          className="ml-auto flex h-[34px] w-[62px] items-center justify-center rounded-[4px] border-2 border-[#5c1a20] bg-[linear-gradient(#e9a99c,#d98c7e_48%,#bb3c26_50%,#d0735e)] shadow-[inset_0_0_0_2px_#e8b3a8]"
        >
          <CloseIcon stroke="#6a5258" />
        </button>
      </header>
      <AddressBar />
      <DialogToolbar />
      <div className="flex h-[600px] shrink-0 bg-[#fcfcfc]">
        <NavPane />
        <FileList />
      </div>
      <footer className="relative flex flex-1 flex-col gap-[13px] bg-[#f0f0f0] pt-[18px] pr-9 text-[23px] text-black">
        <div className="flex items-center justify-end">
          <label htmlFor="file-name" className="mr-3">File name:</label>
          <div className="flex h-[47px] w-[595px] items-center border-2 border-[#e3e9ef] border-t-[#abadb3] bg-white pr-2">
            <input id="file-name" defaultValue="Stream_1.lcs" className="min-w-0 flex-1 px-[6px] outline-none" />
            <Triangle className="h-2 w-[14px]" />
          </div>
          <div className="relative ml-6">
            <select
              aria-label="File type"
              className="h-[46px] w-[375px] appearance-none rounded-md border-2 border-[#707070] bg-[linear-gradient(#f2f2f2,#ebebeb_50%,#dddddd_50%,#cfcfcf)] px-[6px]"
            >
              <option>Link CAN Stream Files (*.lcs)</option>
            </select>
            <Triangle className="pointer-events-none absolute top-[19px] right-2 h-2 w-4" />
          </div>
        </div>
        <div className="flex justify-end gap-7">
          <PushButton primary className="h-12 w-[172px]">Open</PushButton>
          <PushButton className="h-12 w-[172px]">Cancel</PushButton>
        </div>
        <Svg box="0 0 16 16" className="absolute right-1 bottom-1 h-4 w-4">
          <path d="M12 2H15M12 7H15M7 7H10M12 13H15M7 13H10M1 13H4" stroke="#b4b4b4" strokeWidth="3" />
        </Svg>
      </footer>
      <Svg box="0 0 48 70" className="absolute top-[264px] left-[562px] h-[70px] w-12">
        <path d="M10 3L46 36L29 37L40 62L27 68L17 42L3 52Z" fill="#fff" stroke="#000" strokeWidth="4" strokeLinejoin="round" />
      </Svg>
    </section>
  );
}

/* ---------- Windows taskbar ---------- */

function StartOrb() {
  return (
    <Svg box="0 0 74 74" className="h-[74px] w-[74px]">
      <defs>
        <linearGradient id="orb" x2="0" y2="1">
          <stop offset="0" stopColor="#b9c8d6" />
          <stop offset=".48" stopColor="#4b7390" />
          <stop offset=".5" stopColor="#0c4271" />
          <stop offset=".75" stopColor="#0d78b5" />
          <stop offset="1" stopColor="#0be4ff" />
        </linearGradient>
      </defs>
      <circle cx="37" cy="37" r="35" fill="url(#orb)" stroke="#1f4f7a" strokeWidth="2" />
      <circle cx="37" cy="37" r="33" stroke="#9fc6de" strokeWidth="1.500" />
      <path d="M23 18Q32 12 40 17L36 33Q28 29 19 34Z" fill="#e5582b" />
      <path d="M42 19Q51 24 60 20L56 36Q47 40 38 35Z" fill="#86bb3b" />
      <path d="M18 37Q27 32 35 36L31 52Q23 48 14 53Z" fill="#4da0e2" />
      <path d="M37 38Q46 43 55 39L51 55Q42 59 33 54Z" fill="#fdc32d" />
    </Svg>
  );
}

function IeIcon() {
  return (
    <Svg box="0 0 64 64" className="h-16 w-16">
      <defs>
        <linearGradient id="ie" x2="0" y2="1">
          <stop offset="0" stopColor="#4e9fdc" />
          <stop offset=".5" stopColor="#0b5ba8" />
          <stop offset="1" stopColor="#25b4f5" />
        </linearGradient>
      </defs>
      <path d="M35 7C20 7 10 19 10 32S20 57 36 57C47 57 55 51 59 41H45Q42 46 36 46Q26 46 25 36H61C62 18 52 7 35 7ZM25 27Q27 18 36 18T46 27Z" fill="url(#ie)" stroke="#0a3f78" />
      <path d="M60 18Q66 4 56 3C42 3 8 34 5 54Q4 66 20 58Q8 62 11 50C16 34 42 8 54 7Q61 8 60 18Z" fill="#f6bb1d" stroke="#d29513" />
    </Svg>
  );
}

function ExplorerIcon() {
  return (
    <Svg box="0 0 64 64" className="h-16 w-16">
      <path d="M2 14V6H6L8 3H32L34 8H60L63 12V58H1V14Z" fill="#e6cf6e" stroke="#c4a547" />
      <rect x="8" y="5" width="18" height="6" fill="#fff" />
      <rect x="8" y="5" width="6" height="6" fill="#1fb52c" />
      <rect x="24" y="9" width="22" height="6" fill="#fff" />
      <rect x="24" y="9" width="6" height="6" fill="#c94222" />
      <rect x="40" y="13" width="18" height="6" fill="#fff" />
      <rect x="40" y="13" width="6" height="6" fill="#2d94e8" />
      <path d="M2 18H34L38 22H62V57H2Z" fill="#faeb9c" stroke="#d3b858" />
      <path d="M9 62V40Q9 36 13 36H51Q55 36 55 40V62H45V48H20V62Z" fill="#7ccbee" stroke="#3893c4" strokeWidth="2" />
      <path d="M16 28V54M8 41H25" stroke="#fff" strokeWidth="2" />
    </Svg>
  );
}

function MediaPlayerIcon() {
  return (
    <Svg box="0 0 64 64" className="h-16 w-16">
      <path d="M10 9H56V58L48 60L10 57Z" fill="#8ec6e4" stroke="#5593b8" />
      <path d="M48 9V60M52 9V59" stroke="#d3ecf8" strokeWidth="2" />
      <path d="M5 9H45V62L5 57Z" fill="#a8d6ee" stroke="#5aa0c8" />
      <circle cx="26" cy="34" r="17" fill="#f2741b" stroke="#f7b37c" strokeWidth="2" />
      <path d="M20 22L38 34L20 46Z" fill="#fff" />
    </Svg>
  );
}

function ChromeIcon() {
  return (
    <Svg box="0 0 60 60" className="h-[60px] w-[60px]">
      <circle cx="30" cy="30" r="30" fill="#ffcd40" />
      <path d="M30 30L4 15A30 30 0 0 1 56 16H30Z" fill="#db4437" />
      <path d="M4 15A30 30 0 0 0 29 60L43 36L30 30L17 37Z" fill="#0f9d58" />
      <circle cx="30" cy="30" r="14" fill="#f1f1f1" />
      <circle cx="30" cy="30" r="11" fill="#4285f4" />
    </Svg>
  );
}

const PINNED = [
  ['Internet Explorer', IeIcon],
  ['Windows Explorer', ExplorerIcon],
  ['Windows Media Player', MediaPlayerIcon],
  ['Google Chrome', ChromeIcon],
];

function Tray() {
  return (
    <div className="ml-auto flex h-full items-center bg-[linear-gradient(90deg,transparent,#8295ad_70px)] pl-[94px] text-[21px] text-white">
      <span className="pb-2">NO</span>
      <Triangle dir="up" className="mr-6 ml-8 h-[10px] w-4" color="#eef2f7" />
      <div className="flex items-center gap-4">
        <Svg>
          <path d="M14 4H4V29H23V26" stroke="#414d5c" strokeWidth="5" />
          <path d="M14 4H4V29H23V26" stroke="#fff" strokeWidth="3" />
          <path d="M17 2V9M25 2V9" stroke="#fff" strokeWidth="3" />
          <path d="M13 9H30V15Q29 20 24 20V30H19V20Q14 20 13 15Z" fill="#fff" stroke="#414d5c" />
          <path d="M7 19H14V26H7Z" fill="#fff" />
        </Svg>
        <Svg>
          <path d="M1 11H6L14 2V30L6 21H1Z" fill="#fff" stroke="#414d5c" />
          <path d="M18 11Q21 16 18 21M22 8Q27 16 22 24M26 4Q34 16 26 28" stroke="#fff" strokeWidth="2" />
        </Svg>
        <Svg>
          <path d="M10 5H30V25H8V14" fill="#5b6c82" stroke="#fff" strokeWidth="3" />
          <path d="M11 29H28" stroke="#fff" strokeWidth="3" />
          <path d="M2 2V10H11V2M6 2V10" stroke="#fff" strokeWidth="3" />
        </Svg>
        <Svg>
          <path d="M3 2V30" stroke="#fff" strokeWidth="3" />
          <path d="M6 3Q12 1 17 6T30 8V17Q21 19 16 15T6 15Z" fill="#fff" />
          <circle cx="22" cy="22" r="9" fill="#d8281c" />
          <path d="M18 18L26 26M26 18L18 26" stroke="#fff" strokeWidth="3" />
        </Svg>
      </div>
      <div className="mr-[22px] ml-9 text-center leading-[34px]">
        <p>23:23</p>
        <p>26.08.2019</p>
      </div>
      <button
        type="button"
        aria-label="Show desktop"
        className="h-full w-[30px] border-2 border-[#a9b7c8] bg-[linear-gradient(#99a6b5,#56677a_40%,#7f92a8)]"
      />
    </div>
  );
}

function Taskbar() {
  return (
    <footer className="flex h-20 shrink-0 items-center border-t-2 border-[#4b5663] bg-[linear-gradient(90deg,#7f92ab_110px,#a6c0dd_180px)] shadow-[inset_0_2px_0_#d2e0ef]">
      <button type="button" aria-label="Start" className="flex w-[120px] justify-center pr-[14px]"><StartOrb /></button>
      <div className="flex h-full items-center gap-2">
        {PINNED.map(([name, Icon]) => (
          <button key={name} type="button" aria-label={name} className="flex h-full w-[116px] items-center justify-center">
            <Icon />
          </button>
        ))}
        <button
          type="button"
          aria-label="PCLink"
          className="flex h-full w-[116px] items-center justify-center rounded-[4px] border-2 border-[#3f4f63] bg-[linear-gradient(135deg,#e9f0f8,#c2d4e9_50%,#d4e2f1)] shadow-[inset_0_0_0_2px_#fff]"
        >
          <G4Logo className="h-16 w-16" textClass="text-[34px] leading-none" />
        </button>
      </div>
      <Tray />
    </footer>
  );
}

/* ---------- VirtualBox status bar ---------- */

const DEVICES = [
  ['Hard disks', (
    <>
      <rect x="4" y="1" width="24" height="30" rx="3" fill="#4a9df0" stroke="#1d5fae" strokeWidth="2" />
      <circle cx="16" cy="13" r="10" fill="#e6f3fd" stroke="#1d6cc4" strokeWidth="1.500" />
      <path d="M17 12L8 27L12 29L19 14Z" fill="#fff" stroke="#1d6cc4" strokeWidth="1.500" />
    </>
  )],
  ['Optical drives', (
    <>
      <circle cx="16" cy="16" r="14" fill="#dcecf8" stroke="#3f7fc4" strokeWidth="2" />
      <path d="M16 16L5 8A13 13 0 0 1 13 3ZM16 16L27 22A13 13 0 0 1 20 29Z" fill="#a9e0c0" />
      <path d="M16 16L20 3A13 13 0 0 1 27 10Z" fill="#d8c0f0" />
      <circle cx="16" cy="16" r="4" fill="#fff" stroke="#3f7fc4" strokeWidth="2" />
    </>
  )],
  ['Audio', (
    <>
      <path d="M1 11H5L14 2V24L5 17H1Z" fill="#4a9df0" stroke="#1d5fae" strokeWidth="2" />
      <rect x="18" y="7" width="12" height="17" rx="3" fill="#a9d3f8" stroke="#1d5fae" strokeWidth="2" />
      <path d="M18 12H26M18 16H26M18 20H26M24 24V30M18 31H30" stroke="#1d5fae" strokeWidth="2" />
    </>
  )],
  ['Network', (
    <>
      <rect x="11" y="2" width="20" height="16" fill="#3b8fee" stroke="#777" strokeWidth="2" />
      <path d="M24 21H29" stroke="#999" strokeWidth="2" />
      <rect x="1" y="10" width="21" height="16" fill="#fff" stroke="#555" strokeWidth="2" />
      <rect x="4" y="13" width="15" height="10" fill="#1d74e4" />
      <path d="M5 30H18" stroke="#777" strokeWidth="2" />
    </>
  )],
  ['USB devices', (
    <>
      <path d="M18 8L24 1L31 9L25 15Z" fill="#fff" stroke="#777" strokeWidth="2" />
      <path d="M18 8L25 15Q21 24 8 27L5 25Q8 12 18 8Z" fill="#6cb9f5" stroke="#1d5fae" strokeWidth="2" />
      <circle cx="4" cy="29" r="2.500" fill="#4a9df0" stroke="#1d5fae" />
    </>
  )],
  ['Shared folders', (
    <>
      <path d="M1 8H14L17 4H31V29H1Z" fill="#b5e0fb" stroke="#2a7fcc" strokeWidth="2" />
      <path d="M2 11H30V28H2Z" fill="#3fa0ee" />
    </>
  )],
  ['Display', (
    <>
      <path d="M4 3H31V24L27 27H1V6Z" fill="#2078e6" stroke="#2a6cba" strokeWidth="2" />
      <path d="M2 24V7H22Z" fill="#8cc4f7" />
      <path d="M8 30H24" stroke="#777" strokeWidth="2" />
    </>
  )],
  ['Recording', (
    <>
      <path d="M2 8H20V30H2Z" fill="#fff" stroke="#777" strokeWidth="2" />
      <rect x="4" y="10" width="20" height="16" fill="#2078e6" />
      <path d="M9 5H14V2H31V16H14V14H9Z" fill="#a9b4f4" stroke="#3c4fc0" strokeWidth="2" />
    </>
  )],
  ['Processor', (
    <>
      <path d="M7 0V32M12 0V32M17 0V32M22 0V32M26 0V32M0 7H32M0 12H32M0 17H32M0 22H32M0 26H32" stroke="#4557b8" strokeWidth="2" />
      <rect x="4" y="4" width="24" height="24" rx="2" fill="#a9b8f6" stroke="#4557b8" strokeWidth="2" />
      <path d="M11 8V17Q11 23 16 23T21 17V8H18V17Q18 19 16 19T14 17V8Z" fill="#fff" stroke="#4557b8" />
    </>
  )],
  ['Mouse', (
    <>
      <path d="M20 2Q28 3 27 14Q24 29 10 29Q1 27 2 18Q8 3 20 2Z" fill="#a9d8fa" stroke="#2a7fcc" strokeWidth="2" />
      <path d="M10 8Q14 18 20 2" stroke="#2a7fcc" />
      <path d="M17 10H23L31 19L22 31H16L23 20Z" fill="#7bd32f" stroke="#3a8a10" strokeWidth="1.500" />
    </>
  )],
  ['Keyboard capture', (
    <>
      <rect x="3" y="2" width="27" height="28" rx="4" fill="#b5d3f0" stroke="#3f6a9c" strokeWidth="2" />
      <path d="M13 8H20V15H24L16 24L8 15H13Z" fill="#111" />
    </>
  )],
];

function StatusBar() {
  return (
    <footer className="flex h-[42px] shrink-0 items-center justify-end border-t-2 border-[#7d8590] bg-[linear-gradient(#f7f7f7,#e0e0e0)] pr-6 font-['Inter',sans-serif]">
      <div className="flex gap-[10px]">
        {DEVICES.map(([name, art]) => (
          <button key={name} type="button" aria-label={name}>
            <Svg>{art}</Svg>
          </button>
        ))}
      </div>
      <span className="ml-3 text-[25px] text-black">Left ⌘</span>
    </footer>
  );
}

export default function App() {
  return (
    <div className="flex min-h-screen flex-col bg-white px-[68px] pt-[51px] pb-[84px]">
      <div className="flex flex-1 flex-col overflow-hidden rounded-[10px] bg-white shadow-[0_0_0_1px_#c4c4c4,0_24px_50px_rgba(0,0,0,0.3)]">
        <div className="relative flex h-[45px] shrink-0 items-center justify-center bg-[#f6f6f6] pt-[2px] font-['Inter',sans-serif]">
          <div className="absolute left-4 flex gap-4">
            {['Close window', 'Minimize window', 'Zoom window'].map((label) => (
              <button key={label} type="button" aria-label={label} className="h-6 w-6 rounded-full border border-[#d0d0d0] bg-[#dddddd]" />
            ))}
          </div>
          <p className="text-[26px] text-[#b2b2b2]">Windows 7 All [Running]</p>
        </div>
        <div className={clsx('relative flex flex-1 flex-col', UI_FONT)}>
          <TitleBar />
          <MenuBar />
          <div className="flex flex-1">
            <SideTabs />
            <Workspace />
          </div>
          <Taskbar />
          <CanSetupWindow />
          <OpenDialog />
        </div>
        <StatusBar />
      </div>
    </div>
  );
}
